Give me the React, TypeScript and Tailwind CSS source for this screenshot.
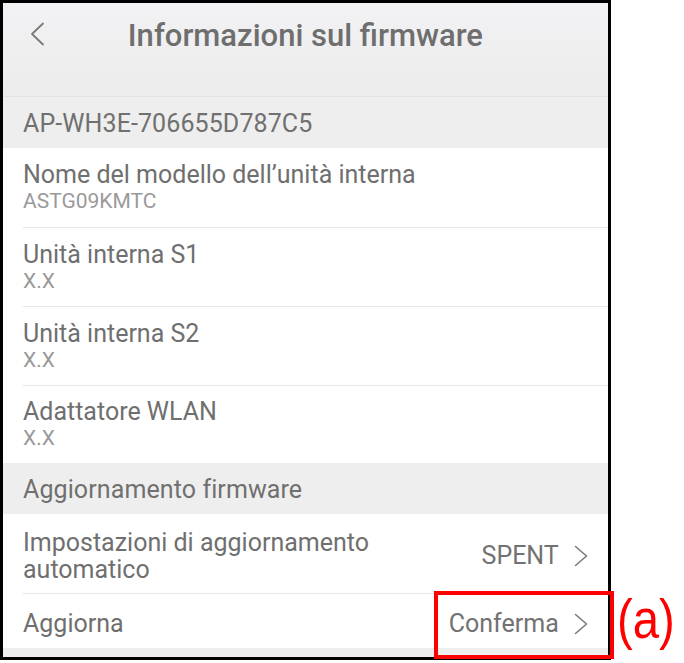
import React from 'react';

const ROW_TITLE = 'text-[25px] leading-[28px] text-[#6f6f6f]';
const ROW_SUB = 'text-[21px] leading-[25px] text-[#9a9a9a]';

function Chevron({ className }: { className?: string }) {
  return (
    <svg viewBox="0 0 14 22" className={className} fill="none">
      <path d="M1.5 1.5 L12.5 11 L1.5 20.5" stroke="#7a7a7a" strokeWidth="1.6" strokeLinecap="round" strokeLinejoin="round" />
    </svg>
  );
}

function SectionHeader({ label }: { label: string }) {
  return (
    <div className="h-[51px] shrink-0 bg-[#eeeeee] flex items-center pl-[20px] pt-[3px]">
      <span className="text-[25px] text-[#707070] tracking-[0.1px]">{label}</span>
    </div>
  );
}

function InfoRow({ title, value, height }: { title: string; value: string; height: string }) {
  return (
    <div className={`${height} shrink-0 bg-white flex flex-col justify-center pl-[20px]`}>
      <span className={ROW_TITLE}>{title}</span>
      <span className={ROW_SUB}>{value}</span>
    </div>
  );
}

function Divider() {
  return (
    <div className="h-px shrink-0 bg-white">
      <div className="ml-[20px] h-px bg-[#e7e7e7]" />
    </div>
  );
}

export default function App() {
  return (
    <div className="relative w-[684px] h-[663px] bg-white font-['Roboto',sans-serif] overflow-hidden">
      <div className="flex items-start">
        {/* Phone screen */}
        <div className="w-[617px] h-[660px] border-[3px] border-black bg-[#eeeeee] flex flex-col">
          {/* Header */}
          <div className="h-[94px] shrink-0 bg-gradient-to-b from-[#f2f2f4] to-[#ececed] border-b border-[#e3e3e3] relative flex items-start justify-center pt-[14px]">
            <svg viewBox="0 0 16 24" className="absolute left-[26px] top-[19px] w-[16px] h-[24px]" fill="none">
              <path d="M14 1.5 L3 12 L14 22.5" stroke="#7a7a7a" strokeWidth="1.8" strokeLinecap="round" strokeLinejoin="round" />
            </svg>
            <span className="text-[31px] leading-[38px] font-medium text-[#6e6e6e]">Informazioni sul firmware</span>
          </div>

          <SectionHeader label="AP-WH3E-706655D787C5" />

          <InfoRow title="Nome del modello dell’unità interna" value="ASTG09KMTC" height="h-[79px]" />
          <Divider />
          <InfoRow title="Unità interna S1" value="X.X" height="h-[78px]" />
          <Divider />
          <InfoRow title="Unità interna S2" value="X.X" height="h-[78px]" />
          <Divider />
          <InfoRow title="Adattatore WLAN" value="X.X" height="h-[77px]" />

          <SectionHeader label="Aggiornamento firmware" />

          {/* Auto update */}
          <div className="h-[79px] shrink-0 bg-white flex items-center justify-between pl-[20px] pr-[20px] pt-[4px]">
            <span className="text-[25px] leading-[27px] text-[#6f6f6f] w-[390px]">
              Impostazioni di aggiornamento automatico
            </span>
            <div className="flex items-center gap-[15px]">
              <span className="text-[25px] text-[#727272]">SPENT</span>
              <Chevron className="w-[14px] h-[22px]" />
            </div>
          </div>
          <Divider />
          {/* Update */}
          <div className="h-[54px] shrink-0 bg-white flex items-center justify-between pl-[20px] pr-[20px] pt-[5px]">
            <span className="text-[25px] text-[#6f6f6f]">Aggiorna</span>
            <div className="flex items-center gap-[15px]">
              <span className="text-[25px] text-[#727272]">Conferma</span>
              <Chevron className="w-[14px] h-[22px]" />
            </div>
          </div>
        </div>

        {/* Annotation label */}
        <div className="mt-[588px] ml-[6px] text-[55px] leading-[62px] text-[#ff0000] font-['Liberation_Sans',sans-serif] scale-x-[0.86] origin-left">
          (a)
        </div>
      </div>

      {/* Annotation box */}
      <div className="absolute left-[434px] top-[591px] w-[180px] h-[68px] border-[4px] border-[#ff0000]" />
    </div>
  );
}
